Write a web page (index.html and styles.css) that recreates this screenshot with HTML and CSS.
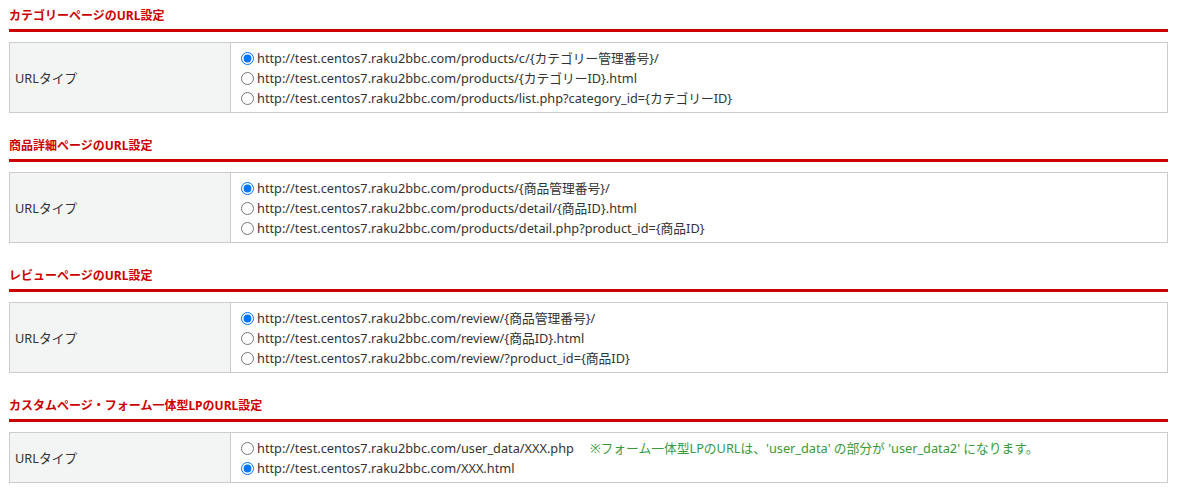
FILE: index.html
```html
<!DOCTYPE html>
<html lang="ja">
<head>
<meta charset="utf-8">
<title>URL設定</title>
<link rel="stylesheet" href="styles.css">
</head>
<body>
<div class="wrap">
  <section class="sec">
    <h2 class="sec-title">カテゴリーページのURL設定</h2>
    <div class="tbl">
      <div class="label">URLタイプ</div>
      <div class="opts">
        <label class="opt"><input type="radio" name="c" checked><span>http://test.centos7.raku2bbc.com/products/c/{カテゴリー管理番号}/</span></label>
        <label class="opt"><input type="radio" name="c"><span>http://test.centos7.raku2bbc.com/products/{カテゴリーID}.html</span></label>
        <label class="opt"><input type="radio" name="c"><span>http://test.centos7.raku2bbc.com/products/list.php?category_id={カテゴリーID}</span></label>
      </div>
    </div>
  </section>
  <section class="sec">
    <h2 class="sec-title">商品詳細ページのURL設定</h2>
    <div class="tbl">
      <div class="label">URLタイプ</div>
      <div class="opts">
        <label class="opt"><input type="radio" name="p" checked><span>http://test.centos7.raku2bbc.com/products/{商品管理番号}/</span></label>
        <label class="opt"><input type="radio" name="p"><span>http://test.centos7.raku2bbc.com/products/detail/{商品ID}.html</span></label>
        <label class="opt"><input type="radio" name="p"><span>http://test.centos7.raku2bbc.com/products/detail.php?product_id={商品ID}</span></label>
      </div>
    </div>
  </section>
  <section class="sec">
    <h2 class="sec-title">レビューページのURL設定</h2>
    <div class="tbl">
      <div class="label">URLタイプ</div>
      <div class="opts">
        <label class="opt"><input type="radio" name="r" checked><span>http://test.centos7.raku2bbc.com/review/{商品管理番号}/</span></label>
        <label class="opt"><input type="radio" name="r"><span>http://test.centos7.raku2bbc.com/review/{商品ID}.html</span></label>
        <label class="opt"><input type="radio" name="r"><span>http://test.centos7.raku2bbc.com/review/?product_id={商品ID}</span></label>
      </div>
    </div>
  </section>
  <section class="sec">
    <h2 class="sec-title">カスタムページ・フォーム一体型LPのURL設定</h2>
    <div class="tbl">
      <div class="label">URLタイプ</div>
      <div class="opts">
        <label class="opt"><input type="radio" name="u"><span>http://test.centos7.raku2bbc.com/user_data/XXX.php</span><span class="note">※フォーム一体型LPのURLは、'user_data' の部分が 'user_data2' になります。</span></label>
        <label class="opt"><input type="radio" name="u" checked><span>http://test.centos7.raku2bbc.com/XXX.html</span></label>
      </div>
    </div>
  </section>
</div>
</body>
</html>
```
FILE: styles.css
```css
html, body {
  margin: 0;
  padding: 0;
  background: #fff;
}
body {
  font-family: "Noto Sans", "Noto Sans CJK JP", sans-serif;
  font-size: 12.75px;
  color: #333;
}
.wrap {
  padding: 6px 13px 0 9px;
}
.sec {
  margin-bottom: 23px;
}
.sec-title {
  margin: 0 0 10px;
  font-size: 12px;
  font-weight: bold;
  color: #cc0000;
  line-height: 20px;
  padding-bottom: 3px;
  border-bottom: 3px solid #c00;
}
.tbl {
  display: flex;
  border: 1px solid #ccc;
}
.label {
  width: 215px;
  padding-left: 5px;
  background: #f3f4f4;
  border-right: 1px solid #ccc;
  display: flex;
  align-items: center;
}
.opts {
  flex: 1;
  padding: 5px 5px 4px;
  display: flex;
  flex-direction: column;
}
.opt {
  display: flex;
  align-items: center;
  height: 20px;
  line-height: 20px;
  white-space: nowrap;
}
.opt input {
  margin: 0 3px 0 5px;
  width: 13px;
  height: 13px;
}
.note {
  margin-left: 16px;
  color: #3a9a3a;
}
```
